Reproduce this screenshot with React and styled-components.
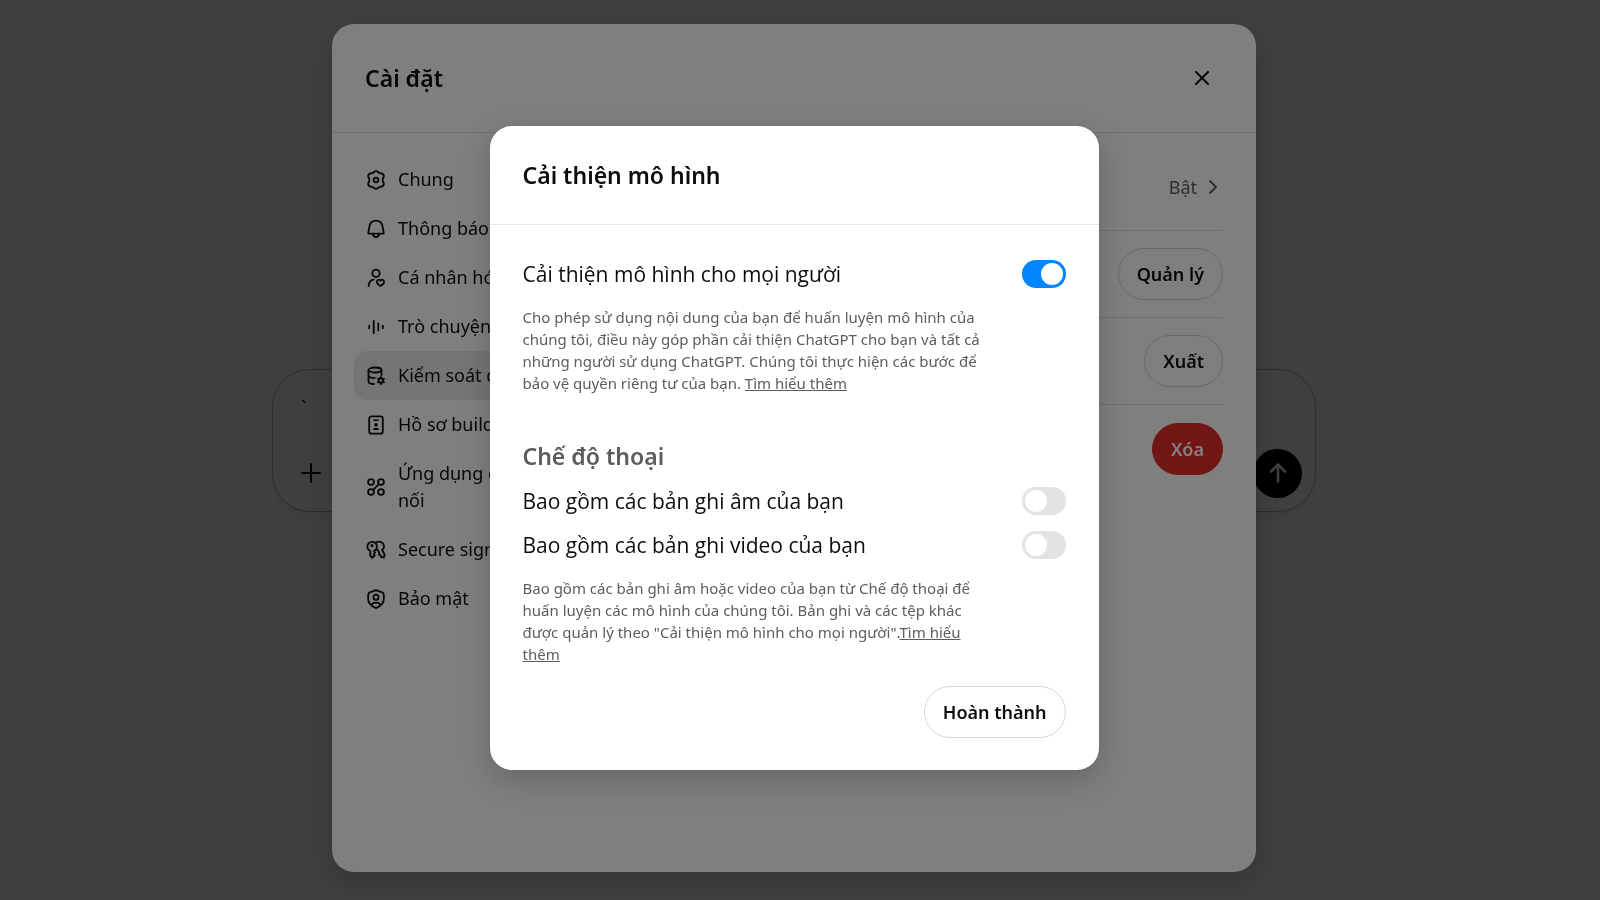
import React, { useState } from 'react'
import styled, { createGlobalStyle } from 'styled-components';

const menus = [
  { id: 'general', label: 'Chung' },
  { id: 'notice', label: 'Thông báo' },
  { id: 'personal', label: 'Cá nhân hóa' },
  { id: 'voice', label: 'Trò chuyện thoại' },
  { id: 'data', label: 'Kiểm soát dữ liệu' },
  { id: 'builder', label: 'Hồ sơ builder' },
  { id: 'apps', label: 'Ứng dụng được kết nối' },
  { id: 'keys', label: 'Secure sign in' },
  { id: 'security', label: 'Bảo mật' },
];

const icons = {
  general: (
    <>
      <path d="M7.9 2Q10 .4 12.1 2Q12.9 3.2 14.3 3.1Q17 3.2 17.8 5.6Q18 6.4 17.4 7.6Q16.6 8.8 16.6 10Q16.6 11.2 17.4 12.4Q18 13.6 17.8 14.4Q17 16.8 14.3 16.9Q12.9 16.8 12.1 18Q10 19.6 7.9 18Q7.1 16.8 5.7 16.9Q3 16.8 2.2 14.4Q2 13.6 2.6 12.4Q3.4 11.2 3.4 10Q3.4 8.8 2.6 7.6Q2 6.4 2.2 5.6Q3 3.2 5.7 3.1Q7.1 3.2 7.9 2Z" />
      <circle cx="10" cy="10" r="2.3" />
    </>
  ),
  notice: (
    <>
      <path d="M3 14.7C2.5 14.7 2.2 14.3 2.3 13.8L3.4 7.8C4 4.1 6.7 1.7 10 1.7C13.3 1.7 16 4.1 16.6 7.8L17.7 13.8C17.8 14.3 17.5 14.7 17 14.7Z" />
      <path d="M6.8 15C7.2 16.9 8.3 18 10 18C11.7 18 12.8 16.9 13.2 15" />
    </>
  ),
  personal: (
    <>
      <circle cx="10" cy="5.3" r="3.7" />
      <path d="M2.6 18.2C2.8 14.4 4.6 12.1 7.8 11.7" />
      <path d="M14.4 18C12 16.7 10.9 15.5 10.9 13.8C10.9 11.6 13.3 11 14.5 12.7C15.7 11 18.1 11.6 18.1 13.8C18.1 15.5 16.8 16.8 14.4 18Z" />
    </>
  ),
  voice: <path d="M3.2 8.7V11.3M7.7 3.8V16.2M12.3 6.4V13.6M16.8 8.7V11.3" />,
  data: (
    <>
      <ellipse cx="9" cy="4" rx="6.5" ry="2.5" />
      <path d="M2.5 4V15.5C2.5 17 4.8 18 8 18M15.5 4V9M2.5 9.5C2.5 11 5 12 8.7 11.9" />
      <circle cx="14.9" cy="14.5" r="2.2" strokeWidth="2" />
      <path d="M14.9 10.9V12M14.9 17V18.1M11.8 12.7L12.8 13.3M17 15.7L18 16.3M11.8 16.3L12.8 15.7M17 13.3L18 12.7" />
    </>
  ),
  builder: (
    <>
      <rect x="3.2" y="1.4" width="13.6" height="17.2" rx="2.2" />
      <path d="M7.8 5.3H12.2" strokeWidth="1.4" />
      <circle cx="10" cy="9.8" r="1.8" fill="currentColor" stroke="none" />
      <path d="M6.9 14.9C7.3 11.9 12.7 11.9 13.1 14.9Z" fill="currentColor" stroke="none" />
    </>
  ),
  apps: (
    <>
      <circle cx="5" cy="5" r="2.9" />
      <circle cx="15" cy="5" r="2.9" />
      <circle cx="5" cy="15" r="2.9" />
      <circle cx="15" cy="15" r="2.9" />
      <path d="M7.2 12.8L12.8 7.2" />
    </>
  ),
  keys: (
    <>
      <path d="M9.7 9.8C11.4 8.2 11.3 4.8 9.5 3C7.6 1.3 4.3 1.4 2.6 3.3C.8 5.3 1 8.3 2.8 9.9L4.3 11V15.7L6.2 17.8L8.7 15.5L7.7 14L9 12.6L8.1 11Z" />
      <circle cx="6" cy="5.6" r=".7" fill="currentColor" />
      <path d="M10.4 2.4C12.8 .8 16.5 1.6 17.6 4.5C18.4 6.8 17.7 8.7 16 9.9L18.7 14.7L17.9 17.6L15.1 17L14.7 15.2L13.1 14.8L13.3 12.9L11.5 9.8" />
    </>
  ),
  security: (
    <>
      <path d="M10 1.2L16.2 3.4C17.2 3.8 17.8 4.6 17.8 5.7V10.1C17.8 14.4 15 16.9 11.1 18.6C10.4 18.9 9.6 18.9 8.9 18.6C5 16.9 2.2 14.4 2.2 10.1V5.7C2.2 4.6 2.8 3.8 3.8 3.4Z" />
      <circle cx="10" cy="8.2" r="2.6" />
      <path d="M5.7 15.6C6.6 12.9 13.4 12.9 14.3 15.6" />
    </>
  ),
};

const App = () => {
  const [menu, setMenu] = useState('data');
  const [message, setMessage] = useState('`');
  const [improve, setImprove] = useState(true);
  const [audio, setAudio] = useState(false);
  const [video, setVideo] = useState(false);

  return (
    <>
      <GlobalStyle />
      <Page>
        <Composer>
          <textarea aria-label="Tin nhắn" value={message} onChange={(e) => setMessage(e.target.value)} />
          <div className="actions">
            <IconButton aria-label="Thêm">
              <svg width="20" height="20" viewBox="0 0 20 20"><path d="M10 1V19M1 10H19" /></svg>
            </IconButton>
            <SendButton aria-label="Gửi">
              <svg width="20" height="20" viewBox="0 0 20 20"><path d="M10 18.5V2M3 8.5L10 1.5L17 8.5" /></svg>
            </SendButton>
          </div>
        </Composer>
      </Page>

      <Overlay>
        <Settings role="dialog" aria-labelledby="settings-title">
          <SettingsHeader>
            <Title id="settings-title">Cài đặt</Title>
            <IconButton aria-label="Đóng">
              <svg width="14" height="14" viewBox="0 0 14 14"><path d="M1 1L13 13M13 1L1 13" /></svg>
            </IconButton>
          </SettingsHeader>
          <SettingsBody>
            <Menu>
              {menus.map((m) => (
                <MenuItem key={m.id} $active={menu === m.id} onClick={() => setMenu(m.id)}>
                  <svg width="20" height="20" viewBox="0 0 20 20">{icons[m.id]}</svg>
                  <span>{m.label}</span>
                </MenuItem>
              ))}
            </Menu>
            <Content>
              <ContentRow>
                <ValueButton>
                  Bật
                  <svg width="9" height="14" viewBox="0 0 9 14"><path d="M1 1L7 7L1 13" /></svg>
                </ValueButton>
              </ContentRow>
              <ContentRow><PillButton>Quản lý</PillButton></ContentRow>
              <ContentRow><PillButton>Xuất</PillButton></ContentRow>
              <ContentRow><PillButton $danger>Xóa</PillButton></ContentRow>
            </Content>
          </SettingsBody>
        </Settings>
      </Overlay>

      <Overlay>
        <Modal role="dialog" aria-labelledby="modal-title">
          <ModalHeader>
            <Title id="modal-title">Cải thiện mô hình</Title>
          </ModalHeader>
          <ModalBody>
            <SwitchRow>
              <span>Cải thiện mô hình cho mọi người</span>
              <Switch checked={improve} onChange={() => setImprove(!improve)} />
            </SwitchRow>
            <Description>
              Cho phép sử dụng nội dung của bạn để huấn luyện mô hình của chúng tôi, điều này góp phần cải thiện ChatGPT cho bạn và tất cả những người sử dụng ChatGPT. Chúng tôi thực hiện các bước để bảo vệ quyền riêng tư của bạn. <a href="#learn-more">Tìm hiểu thêm</a>
            </Description>
            <SectionTitle>Chế độ thoại</SectionTitle>
            <SwitchRow>
              <span>Bao gồm các bản ghi âm của bạn</span>
              <Switch checked={audio} onChange={() => setAudio(!audio)} />
            </SwitchRow>
            <SwitchRow>
              <span>Bao gồm các bản ghi video của bạn</span>
              <Switch checked={video} onChange={() => setVideo(!video)} />
            </SwitchRow>
            <Description>
              Bao gồm các bản ghi âm hoặc video của bạn từ Chế độ thoại để huấn luyện các mô hình của chúng tôi. Bản ghi và các tệp khác được quản lý theo "Cải thiện mô hình cho mọi người".<a href="#learn-more-voice">Tìm hiểu thêm</a>
            </Description>
          </ModalBody>
          <ModalFooter>
            <PillButton>Hoàn thành</PillButton>
          </ModalFooter>
        </Modal>
      </Overlay>
    </>
  )
}

const GlobalStyle = createGlobalStyle`
  * {
    box-sizing: border-box;
  }
  body {
    margin: 0;
    background-color: white;
    color: #0d0d0d;
    font-family: "Noto Sans", "Open Sans", sans-serif;
  }
  button {
    font-family: inherit;
    color: inherit;
    cursor: pointer;
  }
  svg {
    flex-shrink: 0;
    fill: none;
    stroke: currentColor;
    stroke-width: 1.8;
    stroke-linecap: round;
    stroke-linejoin: round;
  }
`;

const Page = styled.main`
  min-height: 100vh;
  padding: 0 12px 20px 0;
  display: flex;
  align-items: center;
  justify-content: center;
`;

const Composer = styled.div`
  width: 100%;
  max-width: 1044px;
  padding: 24px 13px 13px 28px;
  border: 1px solid #b4b4b4;
  border-radius: 38px;
  box-shadow: 0 4px 10px rgba(0, 0, 0, 0.08);
  textarea {
    display: block;
    width: 100%;
    height: 55px;
    padding: 0;
    border: none;
    outline: none;
    resize: none;
    background-color: transparent;
    color: inherit;
    font-family: inherit;
    font-size: 20px;
  }
  .actions {
    display: flex;
    align-items: center;
    justify-content: space-between;
  }
`;

const IconButton = styled.button`
  display: flex;
  align-items: center;
  justify-content: center;
  padding: 0;
  margin: 0;
  border: none;
  background-color: transparent;
  svg {
    stroke-width: 2;
  }
`;

const SendButton = styled(IconButton)`
  width: 49px;
  height: 49px;
  border-radius: 50%;
  background-color: black;
  color: white;
  svg {
    stroke-width: 2.6;
  }
`;

const Overlay = styled.div`
  position: fixed;
  inset: 0;
  display: flex;
  align-items: center;
  justify-content: center;
  padding: 24px 12px 28px 0;
  background-color: rgba(0, 0, 0, 0.5);
`;

const Settings = styled.section`
  display: flex;
  flex-direction: column;
  width: 100%;
  max-width: 924px;
  height: 100%;
  border-radius: 22px;
  background-color: white;
  box-shadow: 0 10px 30px rgba(0, 0, 0, 0.2);
`;

const SettingsHeader = styled.header`
  display: flex;
  align-items: center;
  justify-content: space-between;
  height: 109px;
  padding: 0 47px 0 33px;
  border-bottom: 1px solid #dedede;
`;

const Title = styled.h2`
  margin: 0;
  font-size: 23px;
  line-height: 32px;
  font-weight: 600;
`;

const SettingsBody = styled.div`
  display: flex;
  flex: 1;
`;

const Menu = styled.nav`
  width: 232px;
  padding: 22px 0 22px 22px;
`;

const MenuItem = styled.button`
  display: flex;
  align-items: center;
  gap: 12px;
  width: 100%;
  padding: 11px 0 11px 12px;
  border: none;
  border-radius: 13px;
  background-color: ${(props) => (props.$active ? '#ebebeb' : 'transparent')};
  font-size: 18px;
  line-height: 27px;
  text-align: left;
`;

const Content = styled.div`
  flex: 1;
  padding: 11px 33px 0 22px;
`;

const ContentRow = styled.div`
  display: flex;
  align-items: center;
  justify-content: flex-end;
  height: 87px;
  border-bottom: 1px solid #dedede;
  &:last-child {
    border-bottom: none;
  }
`;

const ValueButton = styled.button`
  display: flex;
  align-items: center;
  gap: 12px;
  padding: 0 5px 0 0;
  border: none;
  background-color: transparent;
  color: #5d5d5d;
  font-size: 18px;
`;

const PillButton = styled.button`
  height: 52px;
  padding: 0 18px;
  border: 1px solid ${(props) => (props.$danger ? '#e02e2a' : '#d6d6d6')};
  border-radius: 26px;
  background-color: ${(props) => (props.$danger ? '#e02e2a' : 'transparent')};
  color: ${(props) => (props.$danger ? 'white' : '#0d0d0d')};
  font-size: 18px;
  font-weight: 600;
`;

const Modal = styled.section`
  width: 100%;
  max-width: 609px;
  border-radius: 22px;
  background-color: white;
  box-shadow: 0 10px 30px rgba(0, 0, 0, 0.2);
`;

const ModalHeader = styled.header`
  display: flex;
  align-items: center;
  height: 99px;
  padding: 0 33px;
  border-bottom: 1px solid #e8e8e8;
`;

const ModalBody = styled.div`
  padding: 27px 33px 0;
`;

const SwitchRow = styled.label`
  display: flex;
  align-items: center;
  justify-content: space-between;
  height: 44px;
  font-family: "Open Sans", "Noto Sans", sans-serif;
  font-size: 21px;
  cursor: pointer;
`;

const Switch = styled.input.attrs({ type: 'checkbox', role: 'switch' })`
  appearance: none;
  display: flex;
  align-items: center;
  width: 44px;
  height: 28px;
  margin: 0;
  padding: 0 3px;
  border-radius: 14px;
  background-color: #e3e3e3;
  cursor: pointer;
  &::before {
    content: '';
    width: 22px;
    height: 22px;
    border-radius: 50%;
    background-color: white;
  }
  &:checked {
    justify-content: flex-end;
    background-color: #0285ff;
  }
`;

const Description = styled.p`
  max-width: 476px;
  margin: 10px 0 0;
  color: #5d5d5d;
  font-size: 15px;
  line-height: 22px;
  a {
    color: inherit;
    text-decoration: underline;
  }
`;

const SectionTitle = styled.h3`
  margin: 46px 0 7px;
  color: #5d5d5d;
  font-size: 23px;
  line-height: 32px;
  font-weight: 600;
`;

const ModalFooter = styled.footer`
  display: flex;
  justify-content: flex-end;
  padding: 21px 33px 32px;
`;

export default App;
